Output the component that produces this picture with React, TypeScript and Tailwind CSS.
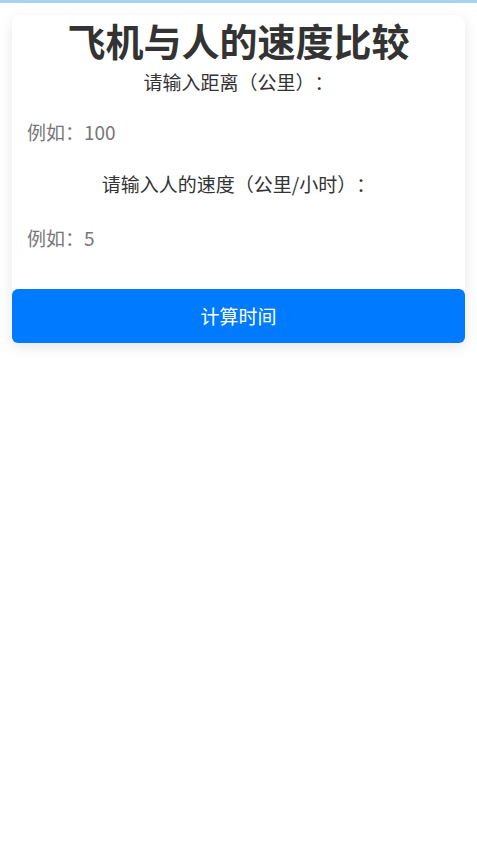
import React from "react";

export default function App() {
  return (
    <div
      className="min-h-[850px] w-full bg-white [text-spacing-trim:space-all]"
      style={{ fontFamily: '"Noto Sans CJK SC", "Noto Sans", sans-serif' }}
    >
      <div className="h-[3px] w-full bg-[#a9d1f1]" />
      <div className="px-[12px] pt-[12px]">
        <div className="flex flex-col rounded-[8px] bg-white shadow-[0_4px_14px_rgba(0,0,0,0.10)]">
          <h1 className="text-center text-[38px] font-bold leading-[50px] text-[#333333]">
            飞机与人的速度比较
          </h1>
          <label className="text-center text-[19px] leading-[33px] text-[#333333]">
            请输入距离（公里）：
          </label>
          <input
            type="text"
            placeholder="例如：100"
            className="mt-[13px] h-[40px] w-full bg-transparent px-[15px] text-[19px] text-[#333] outline-none placeholder:text-[#777777]"
          />
          <label className="mt-[17px] text-center text-[19px] leading-[32px] text-[#333333]">
            请输入人的速度（公里/小时）：
          </label>
          <input
            type="text"
            placeholder="例如：5"
            className="mt-[17px] h-[40px] w-full bg-transparent px-[15px] text-[19px] text-[#333] outline-none placeholder:text-[#777777]"
          />
          <button className="mt-[32px] h-[54px] w-full rounded-[6px] bg-[#007bff] text-[19px] text-white">
            计算时间
          </button>
        </div>
      </div>
    </div>
  );
}
